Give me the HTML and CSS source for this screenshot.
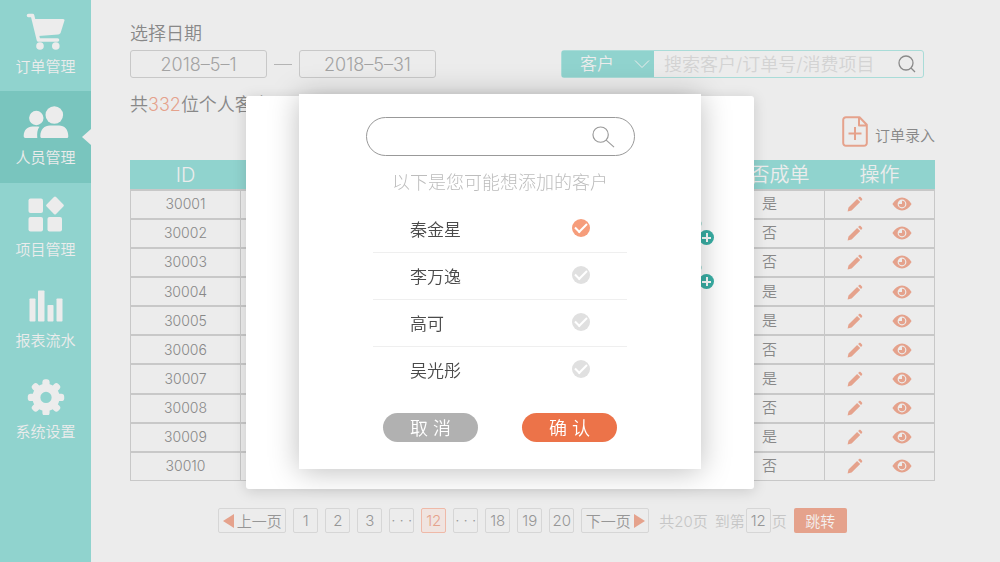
FILE: index.html
```html
<!DOCTYPE html>
<html lang="zh-CN">
<head>
<meta charset="utf-8">
<meta name="viewport" content="width=device-width, initial-scale=1">
<title>人员管理</title>
<link rel="stylesheet" href="styles.css">
</head>
<body>
<svg class="sprite" aria-hidden="true">
  <symbol id="pencil" viewBox="0 0 16 16"><path d="M0.6 15.4l.9-3.900 8.600-8.500 3.100 3.100-8.600 8.500zM11.100 2.100l1-1c.5-.5 1.100-.5 1.500-.1l1.400 1.400c.4.4.4 1 0 1.500l-1 1z"/></symbol>
  <symbol id="eye" viewBox="0 0 20 14"><path fill-rule="evenodd" d="M.4 7C3 2.800 6.200.5 10 .5S17 2.800 19.600 7C17 11.200 13.800 13.500 10 13.500S3 11.200.4 7zM10 2.600a4.400 4.400 0 1 0 0 8.800 4.400 4.400 0 0 0 0-8.800z"/><path d="M10 3.800A3.200 3.200 0 1 1 6.800 7H10z"/></symbol>
  <symbol id="lens" viewBox="0 0 24 24"><circle cx="9" cy="9" r="8"/><path d="M14.800 14.800L23 22"/></symbol>
</svg>

<div class="app">
  <nav class="sidebar">
    <a class="nav-item" href="#orders">
      <svg class="nav-icon" viewBox="0 0 40 36"><path d="M2.500 2H6.500L12.500 26.500H31.500" fill="none" stroke="currentColor" stroke-width="3.600" stroke-linecap="round" stroke-linejoin="round"/><path d="M8.500 5.500H37c1.200 0 1.700.8 1.400 1.800l-3.600 11.400c-.5 1.500-1.200 2-2.600 2.200L12.500 22.500z"/><circle cx="14" cy="32.500" r="3.800"/><circle cx="29.800" cy="32.500" r="3.800"/></svg>
      <span>订单管理</span>
    </a>
    <a class="nav-item active" href="#people" aria-current="page">
      <svg class="nav-icon wide" viewBox="0 0 46 34"><circle cx="13.300" cy="12.500" r="7.200"/><path d="M16.500 21.300C14.200 24 13.900 28 14.300 32.400H2.500C1.200 32.400.7 31.700.7 30.500.7 24.500 4.500 21 9.500 21H14.500z"/><circle cx="31.300" cy="9.500" r="8.800"/><path d="M17.300 30.700C17.300 24 21.500 20 27 20H36c5.500 0 9.300 4 9.300 10.700 0 1.300-.6 1.900-1.800 1.900H19.200c-1.200 0-1.900-.6-1.900-1.900z"/></svg>
      <span>人员管理</span>
    </a>
    <a class="nav-item" href="#projects">
      <svg class="nav-icon" viewBox="0 0 40 36"><rect x="2.500" y="2" width="14.500" height="14.500" rx="2"/><rect x="22.300" y="2.300" width="13.400" height="13.400" rx="1.500" transform="rotate(45 29 9)"/><rect x="2.500" y="20.500" width="14.500" height="14.500" rx="2"/><rect x="21.500" y="20.500" width="14.500" height="14.500" rx="2"/></svg>
      <span>项目管理</span>
    </a>
    <a class="nav-item" href="#reports">
      <svg class="nav-icon" viewBox="0 0 40 36"><rect x="3.500" y="11" width="6" height="23" rx=".8"/><rect x="12" y="3" width="6.500" height="31" rx=".8"/><rect x="21.500" y="17.500" width="6" height="16.500" rx=".8"/><rect x="30.500" y="11" width="6" height="23" rx=".8"/></svg>
      <span>报表流水</span>
    </a>
    <a class="nav-item" href="#settings">
      <svg class="nav-icon" viewBox="0 0 40 38"><g transform="translate(20 20)"><path fill-rule="evenodd" d="M-14 0a14 14 0 1 0 28 0a14 14 0 1 0-28 0zM-5.800 0a5.800 5.800 0 1 0 11.600 0a5.800 5.800 0 1 0-11.600 0z"/><g id="teeth"><rect x="-3.700" y="-18.700" width="7.400" height="9" rx="3"/><rect x="-3.700" y="9.700" width="7.400" height="9" rx="3"/><rect x="-18.700" y="-3.700" width="9" height="7.400" rx="3"/><rect x="9.700" y="-3.700" width="9" height="7.400" rx="3"/></g><use href="#teeth" transform="rotate(45)"/></g></svg>
      <span>系统设置</span>
    </a>
  </nav>

  <main class="content">
    <form class="filters">
      <fieldset class="dates">
        <legend>选择日期</legend>
        <div class="range">
          <input class="date" type="text" value="2018–5–1" aria-label="开始日期">
          <span class="dash"></span>
          <input class="date" type="text" value="2018–5–31" aria-label="结束日期">
        </div>
      </fieldset>
      <div class="search">
        <div class="kind">
          <select aria-label="搜索类型"><option>客户</option></select>
          <svg class="chevron" viewBox="0 0 16 10"><path d="M1 1.500l7 7 7-7"/></svg>
        </div>
        <input class="query" type="text" placeholder="搜索客户/订单号/消费项目" aria-label="搜索">
        <button class="search-btn" type="button" aria-label="搜索"><svg viewBox="0 0 18 18"><circle cx="8" cy="8" r="7"/><path d="M13 13l4 4"/></svg></button>
      </div>
    </form>

    <div class="summary">
      <p class="count">共<em>332</em>位个人客户</p>
      <button class="entry" type="button">
        <svg viewBox="0 0 26 31"><path d="M4 1.200H17.500L24.800 8.800V27a2.800 2.800 0 0 1-2.800 2.800H4A2.800 2.800 0 0 1 1.200 27V4A2.800 2.800 0 0 1 4 1.200zM17 1.500V9.500H24.500M13 11V24M6.500 17.500H19.500"/></svg>
        <span>订单录入</span>
      </button>
    </div>

    <table class="grid">
      <colgroup><col class="c-id"><col><col class="c-deal"><col class="c-ops"></colgroup>
      <thead><tr><th scope="col">ID</th><td></td><th scope="col">是否成单</th><th scope="col">操作</th></tr></thead>
      <tbody>
        <tr><td class="id">30001</td><td></td><td>是</td><td><div class="ops"><button type="button" aria-label="编辑"><svg class="i-pencil"><use href="#pencil"/></svg></button><button type="button" aria-label="查看"><svg class="i-eye"><use href="#eye"/></svg></button></div></td></tr>
        <tr><td class="id">30002</td><td></td><td>否</td><td><div class="ops"><button type="button" aria-label="编辑"><svg class="i-pencil"><use href="#pencil"/></svg></button><button type="button" aria-label="查看"><svg class="i-eye"><use href="#eye"/></svg></button></div></td></tr>
        <tr><td class="id">30003</td><td></td><td>否</td><td><div class="ops"><button type="button" aria-label="编辑"><svg class="i-pencil"><use href="#pencil"/></svg></button><button type="button" aria-label="查看"><svg class="i-eye"><use href="#eye"/></svg></button></div></td></tr>
        <tr><td class="id">30004</td><td></td><td>是</td><td><div class="ops"><button type="button" aria-label="编辑"><svg class="i-pencil"><use href="#pencil"/></svg></button><button type="button" aria-label="查看"><svg class="i-eye"><use href="#eye"/></svg></button></div></td></tr>
        <tr><td class="id">30005</td><td></td><td>是</td><td><div class="ops"><button type="button" aria-label="编辑"><svg class="i-pencil"><use href="#pencil"/></svg></button><button type="button" aria-label="查看"><svg class="i-eye"><use href="#eye"/></svg></button></div></td></tr>
        <tr><td class="id">30006</td><td></td><td>否</td><td><div class="ops"><button type="button" aria-label="编辑"><svg class="i-pencil"><use href="#pencil"/></svg></button><button type="button" aria-label="查看"><svg class="i-eye"><use href="#eye"/></svg></button></div></td></tr>
        <tr><td class="id">30007</td><td></td><td>是</td><td><div class="ops"><button type="button" aria-label="编辑"><svg class="i-pencil"><use href="#pencil"/></svg></button><button type="button" aria-label="查看"><svg class="i-eye"><use href="#eye"/></svg></button></div></td></tr>
        <tr><td class="id">30008</td><td></td><td>否</td><td><div class="ops"><button type="button" aria-label="编辑"><svg class="i-pencil"><use href="#pencil"/></svg></button><button type="button" aria-label="查看"><svg class="i-eye"><use href="#eye"/></svg></button></div></td></tr>
        <tr><td class="id">30009</td><td></td><td>是</td><td><div class="ops"><button type="button" aria-label="编辑"><svg class="i-pencil"><use href="#pencil"/></svg></button><button type="button" aria-label="查看"><svg class="i-eye"><use href="#eye"/></svg></button></div></td></tr>
        <tr><td class="id">30010</td><td></td><td>否</td><td><div class="ops"><button type="button" aria-label="编辑"><svg class="i-pencil"><use href="#pencil"/></svg></button><button type="button" aria-label="查看"><svg class="i-eye"><use href="#eye"/></svg></button></div></td></tr>
      </tbody>
    </table>

    <div class="pager">
      <button class="page step" type="button"><svg viewBox="0 0 11 14"><path d="M11 0V14L0 7z"/></svg>上一页</button>
      <button class="page" type="button">1</button>
      <button class="page" type="button">2</button>
      <button class="page" type="button">3</button>
      <span class="page">· · ·</span>
      <button class="page current" type="button" aria-current="page">12</button>
      <span class="page">· · ·</span>
      <button class="page" type="button">18</button>
      <button class="page" type="button">19</button>
      <button class="page" type="button">20</button>
      <button class="page step" type="button">下一页<svg viewBox="0 0 11 14"><path d="M0 0V14L11 7z"/></svg></button>
      <span class="total">共20页</span>
      <label class="jump">到第<input class="page" type="text" value="12">页</label>
      <button class="go" type="button">跳转</button>
    </div>
  </main>
</div>

<div class="overlay">
  <div class="sheet">
    <button class="add first" type="button" aria-label="添加"></button>
    <button class="add second" type="button" aria-label="添加"></button>
    <form class="dialog" role="dialog" aria-label="添加客户">
      <div class="finder">
        <input type="text" aria-label="查找客户">
        <svg><use href="#lens"/></svg>
      </div>
      <p class="hint">以下是您可能想添加的客户</p>
      <ul class="people">
        <li><label>秦金星<input type="checkbox" checked></label></li>
        <li><label>李万逸<input type="checkbox"></label></li>
        <li><label>高可<input type="checkbox"></label></li>
        <li><label>吴光彤<input type="checkbox"></label></li>
      </ul>
      <div class="actions">
        <button class="cancel" type="button">取 消</button>
        <button class="confirm" type="button">确 认</button>
      </div>
    </form>
  </div>
</div>
</body>
</html>
```
FILE: styles.css
```css
* { box-sizing: border-box; }

:root {
  --bg: #ececec;
  --teal: #90d3ce;
  --teal-dark: #79c5be;
  --coral: #e5a28c;
  --line: #c8c8c8;
  --text: #888;
}

body {
  margin: 0;
  background: var(--bg);
  color: var(--text);
  font-family: Inter, "Noto Sans CJK SC", sans-serif;
  font-weight: 350;
  font-size: 15px;
}

button, input, select {
  margin: 0;
  padding: 0;
  border: 0;
  background: none;
  color: inherit;
  font: inherit;
}

svg { display: block; flex: none; }
p, ul { margin: 0; padding: 0; }
.sprite { position: absolute; width: 0; height: 0; }

.app { display: flex; min-height: 100vh; }

/* Sidebar */
.sidebar { flex: none; width: 91px; background: var(--teal); }

.nav-item {
  position: relative;
  display: flex;
  flex-direction: column;
  align-items: center;
  gap: 6px;
  height: 91px;
  padding-top: 13px;
  color: var(--bg);
  line-height: 22px;
  text-decoration: none;
}

.nav-item.active { height: 92px; background: var(--teal-dark); }

.nav-item.active::after {
  content: "";
  position: absolute;
  right: 0;
  top: 38px;
  border: solid transparent;
  border-width: 8px 9px 8px 0;
  border-right-color: var(--bg);
}

.nav-icon { width: 40px; height: 37px; fill: currentColor; }
.nav-icon.wide { width: 46px; }

/* Content */
.content { flex: 1; min-width: 0; padding: 22px 65px 20px 39px; }

.filters { display: flex; justify-content: space-between; align-items: flex-end; padding-right: 11px; }

.dates { margin: 0; padding: 0; border: 0; min-width: 0; }
.dates legend { padding: 0; font-size: 18px; line-height: 24px; }
.range { display: flex; align-items: center; gap: 7px; margin-top: 4px; }

.date {
  width: 137px;
  height: 28px;
  border: 1px solid var(--line);
  border-radius: 3px;
  color: #a3a3a3;
  font-size: 18px;
  text-align: center;
}

.dash { width: 18px; height: 1px; background: #b4b4b4; }

.search {
  display: flex;
  width: 363px;
  height: 28px;
  border: 1px solid #a9dcd8;
  border-radius: 3px;
}

.kind { display: grid; align-items: center; width: 92px; background: var(--teal); color: var(--bg); }
.kind select { grid-area: 1 / 1; height: 26px; padding-left: 18px; appearance: none; font-size: 17px; }
.chevron { grid-area: 1 / 1; justify-self: end; width: 16px; height: 10px; margin-right: 4px; fill: none; stroke: currentColor; pointer-events: none; }
.query { flex: 1; min-width: 0; padding-left: 10px; font-size: 18px; }
.query::placeholder { color: #d3d3d3; opacity: 1; }
.search-btn { width: 33px; padding-left: 8px; }
.search-btn svg { width: 18px; height: 18px; fill: none; stroke: #8a8a8a; stroke-width: 1.300; }

.summary { display: flex; justify-content: space-between; align-items: flex-start; margin-top: 14px; }
.count { font-size: 18px; line-height: 25px; }
.count em { color: var(--coral); font-style: normal; }
.entry { display: flex; align-items: center; gap: 7px; margin-top: 24px; }
.entry svg { width: 26px; height: 31px; fill: none; stroke: var(--coral); stroke-width: 2; stroke-linejoin: round; }
.entry span { padding-top: 6px; }

/* Table */
.grid {
  width: 100%;
  height: 321px;
  margin-top: 13px;
  border-collapse: collapse;
  table-layout: fixed;
  text-align: center;
}

.c-id, .c-deal, .c-ops { width: 110px; }
.grid th, .grid td { padding: 0; border: 1px solid var(--line); line-height: 20px; }
.grid thead th, .grid thead td { height: 29px; border-color: var(--teal); background: var(--teal); color: var(--bg); font-size: 20px; font-weight: 350; }
.grid tbody td { border-width: 2px 1px 1px; }
.grid .id { font-size: 14px; }
.ops { display: flex; justify-content: center; align-items: center; gap: 29px; }
.ops button { display: block; }
.i-pencil { width: 16px; height: 16px; fill: var(--coral); }
.i-eye { width: 20px; height: 14px; fill: var(--coral); }

/* Pager */
.pager { display: flex; justify-content: center; align-items: center; gap: 7px; margin-top: 27px; white-space: nowrap; }

.page {
  display: flex;
  justify-content: center;
  align-items: center;
  width: 25px;
  height: 25px;
  border: 1px solid #d6d6d6;
  border-radius: 2px;
  color: #969696;
  text-align: center;
}

.page.step { gap: 3px; width: 68px; }
.page svg { width: 11px; height: 14px; fill: var(--coral); }
.page.current { border-color: #efb9a8; background: #f0e4e0; color: var(--coral); }
.total, .jump { color: #c6c6c6; }
.total { padding-left: 3px; }
.jump { display: flex; align-items: center; gap: 1px; }
.go { width: 53px; height: 25px; border-radius: 2px; background: var(--coral); color: #f4f0ee; }

/* Dialogs */
.overlay {
  position: fixed;
  inset: 0;
  display: flex;
  justify-content: center;
  align-items: flex-start;
  padding-top: 96px;
}

.sheet {
  position: relative;
  padding: 0 53px 20px;
  border-radius: 3px;
  background: #fff;
  box-shadow: 0 2px 14px rgba(0, 0, 0, 0.15);
}

.dialog {
  position: relative;
  display: flex;
  flex-direction: column;
  align-items: center;
  width: 402px;
  margin-top: -2px;
  padding: 23px 0 27px;
  background: #fff;
  box-shadow: 0 2px 28px rgba(0, 0, 0, 0.26);
  color: #4a4a4a;
}

.add {
  position: absolute;
  right: 40px;
  width: 15px;
  height: 15px;
  border-radius: 50%;
  background:
    linear-gradient(#fff, #fff) center / 9px 2px no-repeat,
    linear-gradient(#fff, #fff) center / 2px 9px no-repeat,
    #3ab0a6;
}

.add::before {
  content: "";
  position: absolute;
  left: -2px;
  top: -9px;
  width: 5px;
  height: 5px;
  border-radius: 50%;
  background: #b4e4de;
}

.add.first { top: 134px; }
.add.second { top: 178px; }

.finder {
  display: flex;
  align-items: center;
  width: 269px;
  height: 39px;
  padding: 0 19px 0 20px;
  border: 1px solid #999;
  border-radius: 20px;
}

.finder input { flex: 1; min-width: 0; height: 30px; outline: 0; }
.finder svg { width: 23px; height: 23px; margin-top: 2px; fill: none; stroke: #999; stroke-width: 1.200; }

.hint { margin-top: 14px; color: #bdbdbd; font-size: 18px; font-weight: 300; line-height: 26px; }

.people { width: 254px; margin-top: 10px; list-style: none; font-size: 17px; }
.people li { border-bottom: 1px solid #efefef; }
.people li:last-child { border-bottom-color: transparent; }
.people label { display: flex; justify-content: space-between; align-items: center; height: 46px; padding: 0 37px 2px; }

.people input {
  appearance: none;
  display: grid;
  place-items: center;
  width: 18px;
  height: 18px;
  border-radius: 50%;
  background: #e0e0e0;
}

.people input:checked { background: #f69d7b; }

.people input::after {
  content: "";
  box-sizing: border-box;
  width: 12px;
  height: 7px;
  margin-bottom: 4px;
  border: solid #fff;
  border-width: 0 0 2px 2px;
  rotate: -45deg;
}

.actions { display: flex; gap: 44px; margin-top: 19px; }
.actions button { width: 95px; height: 29px; padding-bottom: 2px; border-radius: 15px; color: #fff; font-size: 18px; }
.actions .cancel { background: #b1b1b1; }
.actions .confirm { background: #ec7349; }
```
